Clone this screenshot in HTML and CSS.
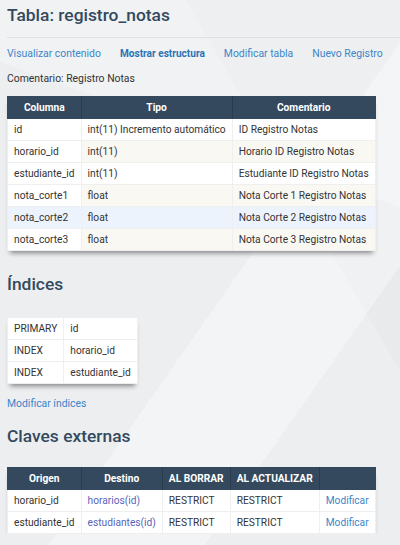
FILE: index.html
```html
<!DOCTYPE html>
<html lang="es">
<head>
<meta charset="utf-8">
<title>Tabla: registro_notas</title>
<link rel="stylesheet" href="styles.css">
</head>
<body>
<div class="page">
  <h2 class="title">Tabla: registro_notas</h2>
  <p class="links">
    <a href="#">Visualizar contenido</a>
    <a href="#" class="active">Mostrar estructura</a>
    <a href="#">Modificar tabla</a>
    <a href="#">Nuevo Registro</a>
  </p>
  <p class="comment">Comentario: Registro Notas</p>

  <table class="grid struct">
    <thead>
      <tr><th>Columna</th><th>Tipo</th><th>Comentario</th></tr>
    </thead>
    <tbody>
      <tr><th>id</th><td>int(11) Incremento automático</td><td>ID Registro Notas</td></tr>
      <tr class="odd"><th>horario_id</th><td>int(11)</td><td>Horario ID Registro Notas</td></tr>
      <tr><th>estudiante_id</th><td>int(11)</td><td>Estudiante ID Registro Notas</td></tr>
      <tr class="odd"><th>nota_corte1</th><td>float</td><td>Nota Corte 1 Registro Notas</td></tr>
      <tr class="hover"><th>nota_corte2</th><td>float</td><td>Nota Corte 2 Registro Notas</td></tr>
      <tr class="odd"><th>nota_corte3</th><td>float</td><td>Nota Corte 3 Registro Notas</td></tr>
    </tbody>
  </table>

  <h3 class="section idx-head">Índices</h3>
  <table class="grid indexes">
    <tbody>
      <tr><th>PRIMARY</th><td>id</td></tr>
      <tr><th>INDEX</th><td>horario_id</td></tr>
      <tr><th>INDEX</th><td>estudiante_id</td></tr>
    </tbody>
  </table>
  <p class="after-idx"><a href="#">Modificar índices</a></p>

  <h3 class="section fk-head">Claves externas</h3>
  <table class="grid fks">
    <thead>
      <tr><th>Origen</th><th>Destino</th><th>AL BORRAR</th><th>AL ACTUALIZAR</th><th></th></tr>
    </thead>
    <tbody>
      <tr><td>horario_id</td><td><a href="#" class="target">horarios(id)</a></td><td>RESTRICT</td><td>RESTRICT</td><td><a href="#">Modificar</a></td></tr>
      <tr><td>estudiante_id</td><td><a href="#" class="target">estudiantes(id)</a></td><td>RESTRICT</td><td>RESTRICT</td><td><a href="#">Modificar</a></td></tr>
    </tbody>
  </table>
</div>
</body>
</html>
```
FILE: styles.css
```css
html, body {
  margin: 0;
  padding: 0;
}
body {
  font-family: Roboto, "Liberation Sans", sans-serif;
  font-size: 10.4px;
  color: #333;
  background-color: #eceef0;
  background-image:
    linear-gradient(125deg, rgba(255,255,255,0) 55%, rgba(255,255,255,0.35) 55%, rgba(255,255,255,0.35) 75%, rgba(255,255,255,0) 75%),
    linear-gradient(200deg, rgba(255,255,255,0.25) 0%, rgba(255,255,255,0.25) 30%, rgba(255,255,255,0) 30%),
    linear-gradient(60deg, rgba(0,0,0,0) 70%, rgba(0,0,0,0.015) 70%);
  min-height: 545px;
}
.page {
  padding-left: 7px;
  overflow: hidden;
}
a {
  color: #3b85c9;
  text-decoration: none;
}
.title {
  margin: 0;
  padding: 4px 0 11px 0;
  line-height: 22px;
  font-size: 17.4px;
  font-weight: 500;
  color: #34495e;
  border-bottom: 1px solid #dfe2e5;
}
.links {
  margin: 9px 0 0 0;
  line-height: 14px;
  display: flex;
  gap: 19px;
}
.links a.active {
  font-weight: bold;
  font-size: 10.1px;
  color: #2a73b5;
}
.comment {
  margin: 11px 0 0 0;
  line-height: 14px;
}
.grid {
  border-collapse: collapse;
  background: #fff;
  font-size: 10.2px;
  box-shadow: 0 5px 5px -3px rgba(0,0,0,0.45);
}
.grid th,
.grid td {
  padding: 4px 6px;
  line-height: 13px;
  text-align: left;
  font-weight: normal;
  border: 1px solid #efefef;
  white-space: nowrap;
}
.grid thead th {
  background: #34495e;
  color: #fff;
  font-weight: bold;
  text-align: center;
  border: 1px solid #34495e;
  border-right-color: #2a3b4c;
}
.grid thead th:last-child {
  border-right-color: #34495e;
}
.grid tbody th {
  background: #fff;
}
.grid tr.odd td {
  background: #f9f8f3;
}
.grid tr.hover td,
.grid tr.hover th {
  background: #edf3fd;
}
.struct {
  margin-top: 10px;
}
.section {
  margin: 0;
  line-height: 22px;
  font-size: 17.4px;
  font-weight: 500;
  color: #34495e;
}
.idx-head {
  margin-top: 22px;
}
.indexes {
  margin-top: 22px;
}
.after-idx {
  margin: 13px 0 0 0;
  line-height: 14px;
}
.fk-head {
  margin-top: 14px;
}
.fks {
  margin-top: 20px;
}
.fks a.target {
  color: #5a63b9;
}
```
